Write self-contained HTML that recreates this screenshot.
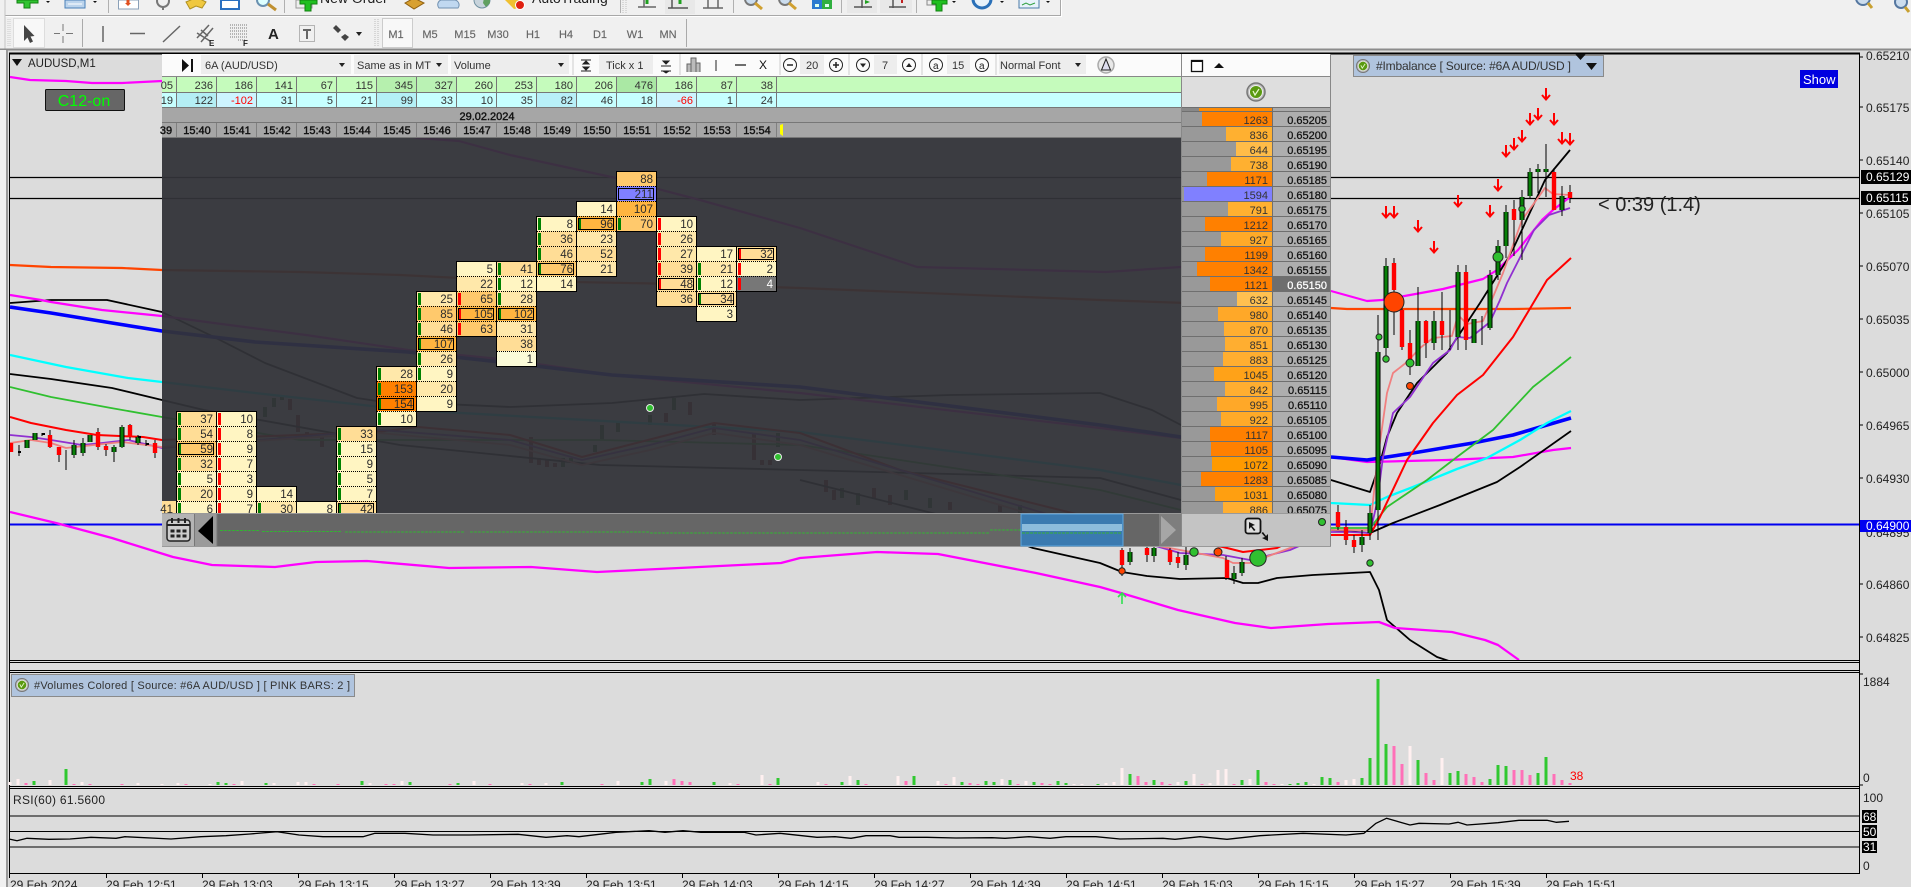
<!DOCTYPE html>
<html><head><meta charset="utf-8"><title>AUDUSD,M1</title>
<style>
html,body{margin:0;padding:0;background:#dcdcdc;overflow:hidden;width:1911px;height:887px}
svg{display:block;font-family:"Liberation Sans",sans-serif}
text{fill:#222;font-size:12px}
.l{fill:none;stroke-linejoin:round}
.c{width:39px;height:15px}
.f0{fill:#fbfbd8}.f1{fill:#fff5c2}.f2{fill:#ffe8aa}.f3{fill:#ffdd96}.f4{fill:#ffc96c}.f5{fill:#ffb540}.f6{fill:#ff8000}.fb{fill:#8080ff}.fg{fill:#777}
.g{width:3px;height:12px;fill:#008000}
.r{width:3px;height:12px;fill:#f00}
.b{width:35px;height:11px;fill:none;stroke:#000}
.o{fill:none;stroke:#000}
.dt{fill:none;stroke:#000;stroke-dasharray:1 1}
.n{text-anchor:end;fill:#2c2c2c;font-size:11.5px}
.t{font-size:11px;text-anchor:middle;fill:#111;stroke:#111;stroke-width:.4}
.p{font-size:11px;text-anchor:end;fill:#111;stroke:#111;stroke-width:.25}
.dv{font-size:11px;text-anchor:end;fill:#333}
.tb{font-size:11px;fill:#333}
.tf{font-size:11px;fill:#666;text-anchor:middle;stroke:#666;stroke-width:.15}
.ax{font-size:12px;fill:#222}
.ti{font-size:11px;fill:#222}
</style></head><body>
<svg width="1911" height="887" viewBox="0 0 1911 887" xmlns="http://www.w3.org/2000/svg">
<defs>
<path id="ar" fill="none" stroke="#f00" stroke-width="2" d="M0 -6V5M-4 1L0 5.5L4 1"/>
<path id="gc" fill="none" d="M1562 196V210M1546 169V172M1538 169V172M1530 172V196M1522 197V220M1506 212V246M1498 246V275M1490 275V328M1474 319V343M1458 272V337M1434 321V343M1418 321V366M1386 266V348M1378 352V510M1370 513V533M1362 537V545M1242 562V573M1234 573V579M1186 555V565M1154 548V556M1130 552V562M27 440V448M35 433V440M74 445V455M83 443V453M90 435V442M114 447V452M122 427V447M138 437V443"/>
<g id="chk"><circle r="9" fill="#bbb" stroke="#777" stroke-width="1.5"/><circle r="6.5" fill="#5a9a10" stroke="#eee" stroke-width="1"/><path d="M-3 -1L-1 3L3 -3" fill="none" stroke="#e8f8d0" stroke-width="1.2"/></g>
</defs>
<rect width="1911" height="887" fill="#dcdcdc"/>
<!-- toolbars -->
<rect width="1911" height="50" fill="#f0f0f0"/>
<path d="M5 15.5H1060.500V0" fill="none" stroke="#a8a8a8"/>
<path d="M5 16.500H1061.500V0" fill="none" stroke="#fff"/>
<path d="M5 0V49" stroke="#c4c4c4" fill="none"/>
<path d="M108.500 0V13M284.500 0V13M620.500 0V13M733.500 0V13M841.500 0V13M916.500 0V13" stroke="#b0b0b0" fill="none"/>
<path d="M0 49.5H1911" stroke="#8c8c8c" stroke-width="2"/>
<!-- top row icons (cropped) -->
<path d="M17 0h21v3h-8v5h-6v-5h-7z" fill="#30c430" stroke="#108010"/>
<path d="M46 1h4l-2 2z" fill="#111"/>
<rect x="65" y="0" width="20" height="8" fill="#bcd4ec" stroke="#4a80b8"/><path d="M68 4h14" stroke="#fff"/>
<path d="M93 1h4l-2 2z" fill="#111"/>
<rect x="118.500" y="0" width="20" height="9" fill="#fff" stroke="#8aa0b8"/><path d="M128 0v4" stroke="#e05020" stroke-width="3"/><path d="M125 3h6l-3 3z" fill="#e05020"/>
<circle cx="163" cy="1" r="6" fill="none" stroke="#777" stroke-width="2"/><path d="M163 6v4" stroke="#777" stroke-width="2"/>
<path d="M186 2L193 -1H200L206 2L202 8L196 6L190 9Z" fill="#f0c840" stroke="#b09020"/>
<rect x="221" y="0" width="18" height="9" fill="#fff" stroke="#2a70c0" stroke-width="2"/>
<circle cx="263" cy="0" r="6" fill="#dff" stroke="#6a90b0" stroke-width="2"/><path d="M268 4L276 10" stroke="#c09030" stroke-width="3"/>
<rect x="296" y="0" width="16" height="8" fill="#eee" stroke="#999"/>
<path d="M300 0h17v4h-6v7h-6v-7h-5z" fill="#20c020" stroke="#108010"/>
<text x="320" y="3" style="font-size:14px" fill="#222">New Order</text>
<path d="M405 3L414 -2L424 3L414 9Z" fill="#d8a030" stroke="#906010"/>
<path d="M439 8a5 5 0 0 1 2 -8h14a5 5 0 0 1 3 8z" fill="#c0d8f0" stroke="#7090b0"/>
<circle cx="482" cy="0" r="8" fill="#c8d4dc" stroke="#7090a0"/><path d="M484 -2h6v5l-4 4l-3 -4z" fill="#60a060"/>
<path d="M505 0h14l4 7l-9 2z" fill="#f0c030"/><circle cx="520" cy="5" r="4.500" fill="#e02010" stroke="#fff"/>
<text x="532" y="3" style="font-size:14px" fill="#222">AutoTrading</text>
<path d="M623 0V14M626 0V14" stroke="#c0c0c0" stroke-dasharray="1 1"/>
<path d="M644 0V7M638 7H656" fill="none" stroke="#666" stroke-width="1.500"/><path d="M647 0v4" stroke="#20a020" stroke-width="3"/>
<rect x="665" y="0" width="30" height="14" fill="#e8e8e8"/>
<path d="M672 0V8M668 8H688" fill="none" stroke="#555" stroke-width="1.500"/><path d="M680 0v4" stroke="#20a020" stroke-width="3"/>
<path d="M708 0V8M703 8H723M718 0V8" fill="none" stroke="#666" stroke-width="1.500"/>
<circle cx="751" cy="-1" r="6" fill="#cde" stroke="#777" stroke-width="2"/><path d="M755 3L762 9" stroke="#d0a030" stroke-width="3"/>
<circle cx="785" cy="-1" r="6" fill="#cde" stroke="#777" stroke-width="2"/><path d="M789 3L796 9" stroke="#d0a030" stroke-width="3"/>
<rect x="812" y="0" width="10" height="9" fill="#2a7ad0"/><rect x="822" y="0" width="10" height="9" fill="#30b040"/><rect x="815" y="4" width="4" height="3" fill="#dfe"/><rect x="825" y="4" width="4" height="3" fill="#dfe"/>
<rect x="847" y="0" width="30" height="13" fill="#e8e8e8"/><rect x="880" y="0" width="32" height="13" fill="#e8e8e8"/>
<path d="M862 0V8M854 7H872" fill="none" stroke="#555" stroke-width="1.500"/><path d="M865 0l5 2-5 2z" fill="#20a020"/>
<path d="M893 0V8M889 7H906" fill="none" stroke="#555" stroke-width="1.500"/><path d="M901 0h2v3h-2z" fill="#c02020"/>
<rect x="927" y="0" width="12" height="5" fill="#eee" stroke="#888"/>
<path d="M932 0h15v4h-5v7h-6v-7h-4z" fill="#20c020" stroke="#108010"/>
<path d="M952 1h4l-2 2z" fill="#111"/>
<circle cx="982" cy="-1" r="9" fill="#e8f2fa" stroke="#2a70b8" stroke-width="3"/>
<path d="M1000 1h4l-2 2z" fill="#111"/>
<rect x="1019" y="-1" width="20" height="9" fill="#e8f2fa" stroke="#4a7aa8"/><path d="M1022 5l4 -2 4 2 5 -2" stroke="#30a040" fill="none"/>
<path d="M1046 1h4l-2 2z" fill="#111"/>
<circle cx="1863" cy="-2" r="7" fill="#cde" stroke="#5577a0" stroke-width="2"/><path d="M1868 3L1872 8" stroke="#c8a030" stroke-width="3"/>
<circle cx="1901" cy="2" r="6" fill="#cde" stroke="#5577a0" stroke-width="2"/><path d="M1905 7L1909 12" stroke="#c8a030" stroke-width="3"/>
<!-- second toolbar -->
<path d="M8 19V47M10 19V47" stroke="#ccc" stroke-dasharray="1 1"/>
<rect x="13.500" y="18.500" width="31" height="29" fill="#f8f8f8" stroke="#ddd"/>
<path d="M24 25L24 41L27.500 37.500L30 43L33 41.500L30.500 36.500L34.500 36Z" fill="#444"/>
<path d="M63 24V31M63 36V43M54 33.500H60M66 33.500H73" stroke="#777"/>
<path d="M82.500 19V47" stroke="#aaa"/>
<path d="M103 26V42" stroke="#666" stroke-width="1.500"/>
<path d="M130 33.500H145" stroke="#666" stroke-width="1.500"/>
<path d="M163 42L180 26" stroke="#666" stroke-width="1.500"/>
<path d="M197 38L209 25M201 42L213 28M197 33L210 41M201 30L208 36" stroke="#666" stroke-width="1.500"/>
<text x="209" y="46" style="font-size:8px;font-weight:bold" fill="#555">E</text>
<path d="M230 25H247M230 28H247M230 31H247M230 34H247M230 37H247M238 40H246" stroke="#777" stroke-dasharray="1 1"/>
<text x="243" y="46" style="font-size:8px;font-weight:bold" fill="#555">F</text>
<text x="268" y="39" style="font-size:15px;font-weight:bold" fill="#666">A</text>
<rect x="299.500" y="25.500" width="15" height="16" fill="none" stroke="#777" stroke-dasharray="1 1"/>
<path d="M303 29h8v2h-3v8h-2v-8h-3z" fill="#666"/>
<path d="M333 28l3 -3 2 2 3 3 -3 3 -5 -5zM341 37l4 -3 4 3 -4 4z" fill="#444"/>
<path d="M356 32h6l-3 4z" fill="#222"/>
<path d="M375 19V47M378 19V47" stroke="#bbb" stroke-dasharray="1 1"/>
<rect x="382.500" y="18.500" width="30" height="29" fill="#f8f8f8" stroke="#ccc"/>
<text class="tf" x="396" y="38">M1</text><text class="tf" x="430" y="38">M5</text><text class="tf" x="465" y="38">M15</text><text class="tf" x="498" y="38">M30</text><text class="tf" x="533" y="38">H1</text><text class="tf" x="566" y="38">H4</text><text class="tf" x="600" y="38">D1</text><text class="tf" x="635" y="38">W1</text><text class="tf" x="668" y="38">MN</text>
<path d="M686.500 19V47" stroke="#aaa"/>
<!-- left frame -->
<rect x="0" y="50" width="6" height="837" fill="#f0f0f0"/>
<rect x="6" y="50" width="2" height="837" fill="#999"/>
<path d="M9.5 53V873" stroke="#000"/>
<path d="M9 53.5H1860" stroke="#000" stroke-width="2"/>
<!-- MAIN CHART -->
<svg x="10" y="54" width="1850" height="607" viewBox="10 54 1850 607">
<path d="M0 177.5H1860M0 198.5H1860" stroke="#000" stroke-width="1.2"/>
<path d="M0 524.5H1860" stroke="#0000f0" stroke-width="2"/>
<!-- faint candles (under panel) -->
<g fill="none" stroke="#226622" stroke-width="4"><path d="M265 407V417M274 398V407M282 396V400M618 422V432M602 425V440M674 398V410M563 458V467M778 433V447M571 458V463M595 445V452M650 415V425M842 488V498M858 493V505M906 490V500M930 498V508M1020 505V515"/></g>
<g fill="none" stroke="#8a1818" stroke-width="4"><path d="M290 399V410M298 415V432M307 432V437M322 437V447M531 437V463M539 458V465M547 460V467M555 463V467M666 413V422M690 402V415M714 423V435M754 433V460M762 460V465M770 460V465M826 480V492M834 490V500M874 488V498M890 495V505M950 502V510M1000 505V512"/></g>
<!-- lines -->
<polyline class="l" stroke="#f0f" stroke-width="2.2" points="10,77 30,80 66,81 92,83 122,83 162,81 300,110 418,138 459,141 510,155 616,178 700,200 800,228 917,267 1106,272 1181,267 1331,291 1367,301 1382,300 1410,295 1443,289 1467,283 1483,279 1497,270 1518,250 1542,220 1553,210 1570,197"/>
<polyline class="l" stroke="#f40" stroke-width="2.2" points="10,265 51,267 122,268 162,270 300,272 400,275 520,281 680,284 800,288 1100,300 1331,308 1347,309 1513,309 1571,308"/>
<polyline class="l" stroke="#000" stroke-width="1.800" points="10,303 51,300 107,300 162,312 214,337 265,363 357,398 377,401 510,407 612,403 704,394 800,400 950,395 1100,393 1152,410 1181,425 1331,480 1370,492 1380,463 1387,437 1397,413 1417,383 1447,353 1480,303 1507,260 1514,247 1545,180 1570,150"/>
<polyline class="l" stroke="#f0f" stroke-width="2.2" points="10,295 41,300 51,302 102,310 162,316 214,323 306,335 408,350 510,360 612,375 800,393 1100,428 1181,438 1331,457 1367,462 1447,460 1513,457 1553,450 1571,448"/>
<polyline class="l" stroke="#00f" stroke-width="3.6" points="10,307 51,313 112,323 162,331 255,342 408,352 510,363 612,375 800,387 1100,425 1181,437 1331,457 1367,460 1413,453 1473,443 1513,435 1571,418"/>
<polyline class="l" stroke="#0ff" stroke-width="2.300" points="10,355 66,367 128,378 162,382 255,393 408,410 800,432 1100,470 1181,485 1331,503 1370,505 1387,497 1413,487 1457,469 1487,458 1520,440 1547,423 1571,411"/>
<polyline class="l" stroke="#000" stroke-width="1.800" points="10,374 51,379 112,388 162,400 204,410 400,445 600,465 800,470 1100,478 1181,500 1331,530 1370,533 1393,523 1440,505 1497,482 1520,467 1571,431"/>
<polyline class="l" stroke="#30c030" stroke-width="1.800" points="10,387 51,397 111,408 162,417 300,440 600,440 800,445 1100,490 1181,510 1331,528 1370,528 1387,507 1427,480 1457,457 1493,430 1533,387 1571,357"/>
<polyline class="l" stroke="#f00" stroke-width="2" points="10,417 31,423 66,430 97,435 143,437 162,440 377,432 418,427 510,435 582,457 648,440 714,423 800,433 900,470 1000,495 1100,520 1181,540 1223,547 1243,552 1277,548 1287,543 1331,535 1370,535 1380,517 1407,460 1433,423 1457,395 1483,375 1513,337 1547,280 1571,258"/>
<polyline class="l" stroke="#000" stroke-width="1.800" points="800,480 960,520 1033,548 1100,563 1122,572 1147,576 1180,579 1227,578 1243,583 1258,583 1277,578 1313,575 1370,572 1379,590 1387,620 1410,640 1437,657 1449,661"/>
<polyline class="l" stroke="#f0f" stroke-width="2.300" points="10,512 56,523 112,538 173,557 212,565 275,567 316,562 367,561 449,568 531,567 597,572 679,568 781,563 800,558 877,552 938,554 1036,573 1100,587 1121,593 1178,610 1235,623 1271,628 1328,624 1379,622 1395,628 1452,632 1485,640 1498,645 1519,660"/>
<polyline class="l" stroke="#9030d0" stroke-width="1.800" points="10,435 31,437 51,440 82,445 102,443 128,440 162,448 380,430 510,440 582,460 650,445 714,428 800,440 1100,530 1180,553 1223,555 1250,560 1290,550 1331,532 1350,532 1370,533 1377,503 1383,457 1393,413 1410,397 1433,363 1450,350 1457,337 1470,338 1490,322 1500,300 1507,283 1534,230 1549,215 1570,208"/>
<polyline class="l" stroke="#f08080" stroke-width="1.800" points="10,443 31,440 51,443 66,448 122,442 162,447 380,433 510,445 582,465 650,450 714,433 800,445 1100,535 1223,558 1233,563 1250,563 1290,548 1331,530 1370,530 1377,463 1387,393 1393,373 1407,362 1420,348 1433,338 1452,336 1458,315 1467,324 1483,321 1503,273 1522,220 1545,188 1553,194 1570,195"/>
<!-- wicks -->
<path stroke="#000" fill="none" d="M1570 185V203M1562 186V216M1554 168V172M1546 144V197M1538 164V193M1530 168V198M1522 190V260M1514 200V256M1506 205V258M1498 240V280M1490 270V330M1482 316V345M1466 265V350M1458 265V350M1450 310V350M1442 292V350M1434 311V350M1426 320V358M1418 287V366M1402 305V350M1394 258V335M1386 258V362M1378 315V360M1378 510V540M1370 505V540M1362 530V552M1354 535V553M1346 520V545M1338 505V530M1410 330V375M59 455V462M66 450V470M50 430V448M74 440V458M83 438V456M98 428V450M106 444V456M114 445V462M122 425V448M130 424V440M138 435V445M146 440V446M155 440V458M42 433V436M19 445V456M1226 556V580M1234 566V584M1242 558V576M1122 548V576M1130 548V565M1147 545V562M1154 545V562M1170 548V565M1178 552V568M1186 545V570"/>
<use href="#gc" stroke="#000" stroke-width="5"/>
<use href="#gc" stroke="#088008" stroke-width="3"/>
<path fill="none" stroke="#f00" stroke-width="4.4" d="M1570 192V198M1554 172V210M1514 209V220M1466 272V340M1442 321V335M1426 321V343M1410 343V360M1402 310V347M1394 263V290M11 443V452M50 435V447M59 447V455M98 432V447M106 446V450M130 425V437M155 443V453M1354 540V547M1346 527V540M1338 512V527M1227 560V578M1178 557V563M1170 550V562M1147 548V555M1122 550V565"/>
<path stroke="#000" stroke-width="2" d="M18 452h3M42 434h3M138 437h3M146 444h3"/>
<!-- circles -->
<circle cx="1394" cy="302" r="10" fill="#f40" stroke="#222"/>
<circle cx="1498" cy="257" r="5" fill="#30c030" stroke="#222"/>
<circle cx="1522" cy="209" r="3.2" fill="#30c030" stroke="#222"/>
<circle cx="1379" cy="337" r="3" fill="#30c030" stroke="#222"/>
<circle cx="1386" cy="359" r="3.2" fill="#30c030" stroke="#222"/>
<circle cx="1410" cy="363" r="4" fill="#30c030" stroke="#222"/>
<circle cx="1410" cy="386" r="3.500" fill="#f40" stroke="#222"/>
<circle cx="1122" cy="571" r="3.2" fill="#f40" stroke="#222"/>
<circle cx="1194" cy="552" r="4.2" fill="#30c030" stroke="#222"/>
<circle cx="1218" cy="552" r="4" fill="#f40" stroke="#222"/>
<circle cx="1258" cy="558" r="8.2" fill="#30c030" stroke="#222"/>
<circle cx="1370" cy="563" r="3.2" fill="#30c030" stroke="#222"/>
<path d="M1122 604V593M1118 597L1122 593L1126 597" fill="none" stroke="#30e050" stroke-width="1.6"/>
<!-- arrows -->
<use href="#ar" x="1546" y="94"/><use href="#ar" x="1538" y="114"/><use href="#ar" x="1530" y="119"/><use href="#ar" x="1554" y="119"/><use href="#ar" x="1522" y="136"/><use href="#ar" x="1514" y="144"/><use href="#ar" x="1506" y="151"/><use href="#ar" x="1562" y="138"/><use href="#ar" x="1570" y="139"/><use href="#ar" x="1498" y="185"/><use href="#ar" x="1458" y="201"/><use href="#ar" x="1490" y="211"/><use href="#ar" x="1386" y="212"/><use href="#ar" x="1394" y="212"/><use href="#ar" x="1418" y="226"/><use href="#ar" x="1434" y="247"/>
</svg>
<!-- chart texts -->
<path d="M12 59h10l-5 7z" fill="#111"/>
<text x="28" y="67" class="ti" style="font-size:11.500px">AUDUSD,M1</text>
<rect x="45.5" y="89.5" width="79" height="21" rx="1" fill="#666" stroke="#111"/>
<text x="84" y="106" text-anchor="middle" style="font-size:16px;fill:#0f0">C12-on</text>
<rect x="1353.5" y="55.5" width="250" height="21" fill="#b0c4de" stroke="#8a8a8a"/>
<g transform="translate(1363,66) scale(.72)"><use href="#chk"/></g>
<text x="1376" y="70" style="font-size:12px;fill:#333" textLength="195">#Imbalance [ Source: #6A AUD/USD ]</text>
<path d="M1586 63h11l-5.5 7z" fill="#111"/><path d="M1575 54h11l-5.5 6z" fill="#111"/>
<rect x="1800" y="70" width="38" height="18" fill="#0000e0"/>
<text x="1803" y="84" style="font-size:13px;fill:#fff">Show</text>
<text x="1598" y="211" style="font-size:20px;fill:#222">&lt; 0:39 (1.4)</text>

<!-- PANEL -->
<rect x="162" y="54" width="1169" height="22" fill="#fbfbfb"/>
<path d="M162 76.5H1331" stroke="#888"/>
<rect x="162" y="77" width="1019" height="15" fill="#c5fbbc"/>
<rect x="162" y="93" width="1019" height="14" fill="#c6ffff"/>
<path d="M162 92.5H1181" stroke="#777"/>
<rect x="162" y="137" width="1019" height="376" fill="#323338" opacity=".95"/>
<path d="M162 137.5H1181" stroke="#777"/>
<!-- delta shades -->
<rect x="377" y="77" width="39" height="15" fill="#b6f0ae"/><rect x="417" y="77" width="39" height="15" fill="#baf2b4"/><rect x="617" y="77" width="39" height="15" fill="#aae8a4"/><rect x="177" y="93" width="39" height="14" fill="#b4eef4"/><rect x="377" y="93" width="39" height="14" fill="#b4f0f6"/><rect x="537" y="93" width="39" height="14" fill="#b8f0f8"/><rect x="217" y="93" width="39" height="14" fill="#cdf4ff"/><rect x="657" y="93" width="39" height="14" fill="#cdf4ff"/>
<path d="M176.500 77V107M216.500 77V107M256.500 77V107M296.500 77V107M336.500 77V107M376.500 77V107M416.500 77V107M456.500 77V107M496.500 77V107M536.500 77V107M576.500 77V107M616.500 77V107M656.500 77V107M696.500 77V107M736.500 77V107M776.500 77V107" stroke="#777"/>
<rect x="162" y="107" width="1019" height="15" fill="#a6a6a6"/>
<rect x="162" y="123" width="1019" height="14" fill="#a6a6a6"/>
<path d="M162 107.5H1181M162 122.5H1181" stroke="#777"/>
<path d="M176.500 123V137M216.500 123V137M256.500 123V137M296.500 123V137M336.500 123V137M376.500 123V137M416.500 123V137M456.500 123V137M496.500 123V137M536.500 123V137M576.500 123V137M616.500 123V137M656.500 123V137M696.500 123V137M736.500 123V137M776.500 123V137" stroke="#808080"/>
<g>
<text class="dv" x="173" y="89">05</text><text class="dv" x="213" y="89">236</text><text class="dv" x="253" y="89">186</text><text class="dv" x="293" y="89">141</text><text class="dv" x="333" y="89">67</text><text class="dv" x="373" y="89">115</text><text class="dv" x="413" y="89">345</text><text class="dv" x="453" y="89">327</text><text class="dv" x="493" y="89">260</text><text class="dv" x="533" y="89">253</text><text class="dv" x="573" y="89">180</text><text class="dv" x="613" y="89">206</text><text class="dv" x="653" y="89">476</text><text class="dv" x="693" y="89">186</text><text class="dv" x="733" y="89">87</text><text class="dv" x="773" y="89">38</text>
<text class="dv" x="173" y="104">19</text><text class="dv" x="213" y="104">122</text><text class="dv" x="253" y="104" style="fill:#f00">-102</text><text class="dv" x="293" y="104">31</text><text class="dv" x="333" y="104">5</text><text class="dv" x="373" y="104">21</text><text class="dv" x="413" y="104">99</text><text class="dv" x="453" y="104">33</text><text class="dv" x="493" y="104">10</text><text class="dv" x="533" y="104">35</text><text class="dv" x="573" y="104">82</text><text class="dv" x="613" y="104">46</text><text class="dv" x="653" y="104">18</text><text class="dv" x="693" y="104" style="fill:#f00">-66</text><text class="dv" x="733" y="104">1</text><text class="dv" x="773" y="104">24</text>
</g>
<text x="487" y="120" class="t">29.02.2024</text>
<text class="t" x="166" y="134">39</text><text class="t" x="197" y="134">15:40</text><text class="t" x="237" y="134">15:41</text><text class="t" x="277" y="134">15:42</text><text class="t" x="317" y="134">15:43</text><text class="t" x="357" y="134">15:44</text><text class="t" x="397" y="134">15:45</text><text class="t" x="437" y="134">15:46</text><text class="t" x="477" y="134">15:47</text><text class="t" x="517" y="134">15:48</text><text class="t" x="557" y="134">15:49</text><text class="t" x="597" y="134">15:50</text><text class="t" x="637" y="134">15:51</text><text class="t" x="677" y="134">15:52</text><text class="t" x="717" y="134">15:53</text><text class="t" x="757" y="134">15:54</text>
<path d="M780 125L783 124V136L780 134Z" fill="#ff0"/>
<!-- panel toolbar -->
<path d="M182 59L189 65.5L182 72Z" fill="#111"/><path d="M192 59V72" stroke="#111" stroke-width="2"/>
<rect x="201" y="55" width="150" height="19" fill="#ededed"/><text x="205" y="69" class="tb">6A (AUD/USD)</text><path d="M339 63h6l-3 4z" fill="#222"/>
<rect x="354" y="55" width="94" height="19" fill="#ededed"/><text x="357" y="69" class="tb">Same as in MT</text><path d="M436 63h6l-3 4z" fill="#222"/>
<rect x="451" y="55" width="118" height="19" fill="#ededed"/><text x="454" y="69" class="tb">Volume</text><path d="M558 63h6l-3 4z" fill="#222"/>
<path d="M573 54V75" stroke="#ccc"/>
<path d="M581 60h10M581 71h10M586 61l-3 3h6zM586 70l-3 -3h6z" stroke="#222" fill="#222"/>
<rect x="599" y="55" width="54" height="19" fill="#ededed"/><text x="606" y="69" class="tb">Tick x 1</text>
<path d="M661 66h10M661 71h10M666 64l-3 -3h6zM666 73l-3 -2h6z" stroke="#222" fill="#222"/>
<path d="M680 54V75" stroke="#ccc"/>
<path d="M687 72V64h4v8M691 72V58h5v14M696 72V63h4v9" fill="#bbb" stroke="#666"/>
<path d="M716 60V71" stroke="#222"/>
<path d="M735 65H746" stroke="#222" stroke-width="1.3"/>
<text x="759" y="69" class="tb" style="fill:#111;font-size:12px">X</text>
<path d="M780 54V75" stroke="#ccc"/>
<circle cx="790" cy="65" r="6.5" fill="none" stroke="#222"/><path d="M787 65h6" stroke="#222" stroke-width="1.5"/>
<rect x="800" y="55" width="24" height="19" fill="#ededed"/><text x="806" y="69" class="tb">20</text>
<circle cx="836" cy="65" r="6.5" fill="none" stroke="#222"/><path d="M833 65h6M836 62v6" stroke="#222" stroke-width="1.5"/>
<path d="M849 54V75" stroke="#ccc"/>
<circle cx="863" cy="65" r="6.5" fill="none" stroke="#222"/><path d="M860 63.500h6l-3 4z" fill="#222"/>
<rect x="874" y="55" width="23" height="19" fill="#ededed"/><text x="882" y="69" class="tb">7</text>
<circle cx="909" cy="65" r="6.5" fill="none" stroke="#222"/><path d="M906 67h6l-3 -4z" fill="#222"/>
<path d="M922 54V75" stroke="#ccc"/>
<circle cx="936" cy="65" r="6.5" fill="none" stroke="#222"/><text x="933" y="69" style="font-size:10px">a</text>
<rect x="947" y="55" width="23" height="19" fill="#ededed"/><text x="952" y="69" class="tb">15</text>
<circle cx="982" cy="65" r="6.5" fill="none" stroke="#222"/><text x="979" y="69" style="font-size:10px">a</text>
<path d="M996 54V75" stroke="#ccc"/>
<rect x="999" y="55" width="87" height="19" fill="#ededed"/><text x="1000" y="69" class="tb">Normal Font</text><path d="M1075 63h6l-3 4z" fill="#222"/>
<circle cx="1106" cy="65" r="8" fill="#e8e8e8" stroke="#aaa" stroke-width="1.5"/><path d="M1106 59L1110.500 70H1101.500Z" fill="#dde" stroke="#222"/>
<rect x="1191.500" y="60.500" width="11" height="11" fill="#fff" stroke="#111" stroke-width="1.300"/><path d="M1191 61h12" stroke="#111" stroke-width="2"/>
<path d="M1214 68h10l-5 -5z" fill="#111"/>
<!-- DOM -->
<rect x="1181" y="77" width="150" height="30" fill="#dedede"/>
<path d="M1181.500 54V546M1330.500 54V546" stroke="#888"/>
<use href="#chk" x="1256" y="92"/>
<rect x="1182" y="107" width="148" height="406" fill="#6f6f6f"/>
<rect x="1182" y="108" width="90" height="3" fill="#888"/><rect x="1199" y="108" width="73" height="3" fill="#ff8a00"/><rect x="1273" y="108" width="57" height="3" fill="#aaa"/>
<g fill="#999">
<rect x="1182" y="112" width="90" height="14"/><rect x="1182" y="127" width="90" height="14"/><rect x="1182" y="142" width="90" height="14"/><rect x="1182" y="157" width="90" height="14"/><rect x="1182" y="172" width="90" height="14"/><rect x="1182" y="187" width="90" height="14"/><rect x="1182" y="202" width="90" height="14"/><rect x="1182" y="217" width="90" height="14"/><rect x="1182" y="232" width="90" height="14"/><rect x="1182" y="247" width="90" height="14"/><rect x="1182" y="262" width="90" height="14"/><rect x="1182" y="277" width="90" height="14"/><rect x="1182" y="292" width="90" height="14"/><rect x="1182" y="307" width="90" height="14"/><rect x="1182" y="322" width="90" height="14"/><rect x="1182" y="337" width="90" height="14"/><rect x="1182" y="352" width="90" height="14"/><rect x="1182" y="367" width="90" height="14"/><rect x="1182" y="382" width="90" height="14"/><rect x="1182" y="397" width="90" height="14"/><rect x="1182" y="412" width="90" height="14"/><rect x="1182" y="427" width="90" height="14"/><rect x="1182" y="442" width="90" height="14"/><rect x="1182" y="457" width="90" height="14"/><rect x="1182" y="472" width="90" height="14"/><rect x="1182" y="487" width="90" height="14"/><rect x="1182" y="502" width="90" height="11"/>
</g>
<g fill="#aeaeae">
<rect x="1273" y="112" width="57" height="14"/><rect x="1273" y="127" width="57" height="14"/><rect x="1273" y="142" width="57" height="14"/><rect x="1273" y="157" width="57" height="14"/><rect x="1273" y="172" width="57" height="14"/><rect x="1273" y="187" width="57" height="14"/><rect x="1273" y="202" width="57" height="14"/><rect x="1273" y="217" width="57" height="14"/><rect x="1273" y="232" width="57" height="14"/><rect x="1273" y="247" width="57" height="14"/><rect x="1273" y="262" width="57" height="14"/><rect x="1273" y="277" width="57" height="14" fill="#6e6e6e"/><rect x="1273" y="292" width="57" height="14"/><rect x="1273" y="307" width="57" height="14"/><rect x="1273" y="322" width="57" height="14"/><rect x="1273" y="337" width="57" height="14"/><rect x="1273" y="352" width="57" height="14"/><rect x="1273" y="367" width="57" height="14"/><rect x="1273" y="382" width="57" height="14"/><rect x="1273" y="397" width="57" height="14"/><rect x="1273" y="412" width="57" height="14"/><rect x="1273" y="427" width="57" height="14"/><rect x="1273" y="442" width="57" height="14"/><rect x="1273" y="457" width="57" height="14"/><rect x="1273" y="472" width="57" height="14"/><rect x="1273" y="487" width="57" height="14"/><rect x="1273" y="502" width="57" height="11"/>
</g>
<rect x="1202" y="112" width="70" height="14" fill="#ff8000"/><rect x="1226" y="127" width="46" height="14" fill="#ffb030"/><rect x="1236" y="142" width="36" height="14" fill="#ffbc48"/><rect x="1231" y="157" width="41" height="14" fill="#ffb030"/><rect x="1207" y="172" width="65" height="14" fill="#ff8000"/><rect x="1184" y="187" width="88" height="14" fill="#8080ff"/><rect x="1228" y="202" width="44" height="14" fill="#ffb030"/><rect x="1205" y="217" width="67" height="14" fill="#ff8000"/><rect x="1221" y="232" width="51" height="14" fill="#ffaa28"/><rect x="1205" y="247" width="67" height="14" fill="#ff8000"/><rect x="1197" y="262" width="75" height="14" fill="#ff8000"/><rect x="1210" y="277" width="62" height="14" fill="#ff8000"/><rect x="1237" y="292" width="35" height="14" fill="#ffc050"/><rect x="1218" y="307" width="54" height="14" fill="#ffa828"/><rect x="1224" y="322" width="48" height="14" fill="#ffae30"/><rect x="1225" y="337" width="47" height="14" fill="#ffae30"/><rect x="1223" y="352" width="49" height="14" fill="#ffae30"/><rect x="1214" y="367" width="58" height="14" fill="#ffa218"/><rect x="1225" y="382" width="47" height="14" fill="#ffae30"/><rect x="1217" y="397" width="55" height="14" fill="#ffa828"/><rect x="1221" y="412" width="51" height="14" fill="#ffaa28"/><rect x="1210" y="427" width="62" height="14" fill="#ff8000"/><rect x="1211" y="442" width="61" height="14" fill="#ff8000"/><rect x="1212" y="457" width="60" height="14" fill="#ff9a00"/><rect x="1201" y="472" width="71" height="14" fill="#ff8000"/><rect x="1215" y="487" width="57" height="14" fill="#ff9f10"/><rect x="1223" y="502" width="49" height="11" fill="#ffae30"/>
<g>
<text class="dv" x="1268" y="124">1263</text><text class="dv" x="1268" y="139">836</text><text class="dv" x="1268" y="154">644</text><text class="dv" x="1268" y="169">738</text><text class="dv" x="1268" y="184">1171</text><text class="dv" x="1268" y="199">1594</text><text class="dv" x="1268" y="214">791</text><text class="dv" x="1268" y="229">1212</text><text class="dv" x="1268" y="244">927</text><text class="dv" x="1268" y="259">1199</text><text class="dv" x="1268" y="274">1342</text><text class="dv" x="1268" y="289">1121</text><text class="dv" x="1268" y="304">632</text><text class="dv" x="1268" y="319">980</text><text class="dv" x="1268" y="334">870</text><text class="dv" x="1268" y="349">851</text><text class="dv" x="1268" y="364">883</text><text class="dv" x="1268" y="379">1045</text><text class="dv" x="1268" y="394">842</text><text class="dv" x="1268" y="409">995</text><text class="dv" x="1268" y="424">922</text><text class="dv" x="1268" y="439">1117</text><text class="dv" x="1268" y="454">1105</text><text class="dv" x="1268" y="469">1072</text><text class="dv" x="1268" y="484">1283</text><text class="dv" x="1268" y="499">1031</text><text class="dv" x="1268" y="514">886</text>
<text class="p" x="1327" y="124">0.65205</text><text class="p" x="1327" y="139">0.65200</text><text class="p" x="1327" y="154">0.65195</text><text class="p" x="1327" y="169">0.65190</text><text class="p" x="1327" y="184">0.65185</text><text class="p" x="1327" y="199">0.65180</text><text class="p" x="1327" y="214">0.65175</text><text class="p" x="1327" y="229">0.65170</text><text class="p" x="1327" y="244">0.65165</text><text class="p" x="1327" y="259">0.65160</text><text class="p" x="1327" y="274">0.65155</text><text class="p" x="1327" y="289" style="fill:#fff;stroke:#fff">0.65150</text><text class="p" x="1327" y="304">0.65145</text><text class="p" x="1327" y="319">0.65140</text><text class="p" x="1327" y="334">0.65135</text><text class="p" x="1327" y="349">0.65130</text><text class="p" x="1327" y="364">0.65125</text><text class="p" x="1327" y="379">0.65120</text><text class="p" x="1327" y="394">0.65115</text><text class="p" x="1327" y="409">0.65110</text><text class="p" x="1327" y="424">0.65105</text><text class="p" x="1327" y="439">0.65100</text><text class="p" x="1327" y="454">0.65095</text><text class="p" x="1327" y="469">0.65090</text><text class="p" x="1327" y="484">0.65085</text><text class="p" x="1327" y="499">0.65080</text><text class="p" x="1327" y="514">0.65075</text>
</g>
<!-- footprint cells -->
<g>
<rect class="c f3" x="162" y="501" style="width:14px"/><text class="n" x="173" y="513">41</text>
<rect class="c f3" x="177" y="411"/><rect class="c f3" x="177" y="426"/><rect class="c f4" x="177" y="441"/><rect class="c f3" x="177" y="456"/><rect class="c f1" x="177" y="471"/><rect class="c f2" x="177" y="486"/><rect class="c f1" x="177" y="501"/>
<rect class="c f1" x="217" y="411"/><rect class="c f1" x="217" y="426"/><rect class="c f1" x="217" y="441"/><rect class="c f1" x="217" y="456"/><rect class="c f1" x="217" y="471"/><rect class="c f1" x="217" y="486"/><rect class="c f1" x="217" y="501"/>
<rect class="c f1" x="257" y="486"/><rect class="c f2" x="257" y="501"/>
<rect class="c f1" x="297" y="501"/>
<rect class="c f3" x="337" y="426"/><rect class="c f1" x="337" y="441"/><rect class="c f1" x="337" y="456"/><rect class="c f1" x="337" y="471"/><rect class="c f1" x="337" y="486"/><rect class="c f3" x="337" y="501"/>
<rect class="c f2" x="377" y="366"/><rect class="c f6" x="377" y="381"/><rect class="c f6" x="377" y="396"/><rect class="c f1" x="377" y="411"/>
<rect class="c f2" x="417" y="291"/><rect class="c f4" x="417" y="306"/><rect class="c f3" x="417" y="321"/><rect class="c f5" x="417" y="336"/><rect class="c f2" x="417" y="351"/><rect class="c f1" x="417" y="366"/><rect class="c f2" x="417" y="381"/><rect class="c f1" x="417" y="396"/>
<rect class="c f1" x="457" y="261"/><rect class="c f2" x="457" y="276"/><rect class="c f4" x="457" y="291"/><rect class="c f5" x="457" y="306"/><rect class="c f4" x="457" y="321"/>
<rect class="c f3" x="497" y="261"/><rect class="c f1" x="497" y="276"/><rect class="c f2" x="497" y="291"/><rect class="c f5" x="497" y="306"/><rect class="c f2" x="497" y="321"/><rect class="c f3" x="497" y="336"/><rect class="c f0" x="497" y="351"/>
<rect class="c f1" x="537" y="216"/><rect class="c f3" x="537" y="231"/><rect class="c f3" x="537" y="246"/><rect class="c f4" x="537" y="261"/><rect class="c f1" x="537" y="276"/>
<rect class="c f1" x="577" y="201"/><rect class="c f5" x="577" y="216"/><rect class="c f2" x="577" y="231"/><rect class="c f3" x="577" y="246"/><rect class="c f2" x="577" y="261"/>
<rect class="c f4" x="617" y="171"/><rect class="c fb" x="617" y="186"/><rect class="c f5" x="617" y="201"/><rect class="c f4" x="617" y="216"/>
<rect class="c f1" x="657" y="216"/><rect class="c f2" x="657" y="231"/><rect class="c f2" x="657" y="246"/><rect class="c f3" x="657" y="261"/><rect class="c f3" x="657" y="276"/><rect class="c f3" x="657" y="291"/>
<rect class="c f1" x="697" y="246"/><rect class="c f2" x="697" y="261"/><rect class="c f1" x="697" y="276"/><rect class="c f3" x="697" y="291"/><rect class="c f1" x="697" y="306"/>
<rect class="c f3" x="737" y="246"/><rect class="c f1" x="737" y="261"/><rect class="c fg" x="737" y="276"/>
<!-- dotted -->
<path class="dt" d="M177 426.500h39m-39 15h39m-39 15h39m-39 15h39m-39 15h39m-39 15h39M217 426.500h39m-39 15h39m-39 15h39m-39 15h39m-39 15h39m-39 15h39M257 501.500h39M337 441.500h39m-39 15h39m-39 15h39m-39 15h39m-39 15h39M377 381.500h39m-39 15h39m-39 15h39M417 306.500h39m-39 15h39m-39 15h39m-39 15h39m-39 15h39m-39 15h39m-39 15h39M457 276.500h39m-39 15h39m-39 15h39m-39 15h39M497 276.500h39m-39 15h39m-39 15h39m-39 15h39m-39 15h39m-39 15h39M537 231.500h39m-39 15h39m-39 15h39m-39 15h39M577 216.500h39m-39 15h39m-39 15h39m-39 15h39M617 186.500h39m-39 15h39m-39 15h39M657 231.500h39m-39 15h39m-39 15h39m-39 15h39m-39 15h39M697 261.500h39m-39 15h39m-39 15h39m-39 15h39M737 261.500h39m-39 15h39"/>
<!-- outlines -->
<path class="o" d="M176.500 411.500h40v110h-40zM216.500 411.500h40v110h-40zM256.500 486.500h40v30h-40zM296.500 501.500h40v20h-40zM336.500 426.500h40v90h-40zM376.500 366.500h40v60h-40zM416.500 291.500h40v120h-40zM456.500 261.500h40v75h-40zM496.500 261.500h40v105h-40zM536.500 216.500h40v75h-40zM576.500 201.500h40v75h-40zM616.500 171.500h40v60h-40zM656.500 216.500h40v90h-40zM696.500 246.500h40v75h-40zM736.500 246.500h40v45h-40z"/>
<!-- bars -->
<rect class="g" x="178" y="413"/><rect class="g" x="178" y="428"/><rect class="g" x="178" y="443"/><rect class="g" x="178" y="458"/><rect class="g" x="178" y="473"/><rect class="g" x="178" y="488"/><rect class="g" x="178" y="503"/>
<rect class="r" x="218" y="413"/><rect class="r" x="218" y="428"/><rect class="r" x="218" y="443"/><rect class="r" x="218" y="458"/><rect class="r" x="218" y="473"/><rect class="r" x="218" y="488"/><rect class="r" x="218" y="503"/>
<rect class="g" x="258" y="503"/>
<rect class="g" x="338" y="428"/><rect class="g" x="338" y="443"/><rect class="g" x="338" y="458"/><rect class="g" x="338" y="473"/><rect class="g" x="338" y="488"/><rect class="g" x="338" y="503"/>
<rect class="g" x="378" y="368"/><rect class="g" x="378" y="383"/><rect class="g" x="378" y="398"/><rect class="g" x="378" y="413"/>
<rect class="g" x="418" y="293"/><rect class="g" x="418" y="308"/><rect class="g" x="418" y="323"/><rect class="g" x="418" y="338"/><rect class="g" x="418" y="353"/><rect class="g" x="418" y="368"/>
<rect class="r" x="458" y="293"/><rect class="r" x="458" y="308"/><rect class="r" x="458" y="323"/>
<rect class="g" x="498" y="263"/><rect class="g" x="498" y="278"/><rect class="g" x="498" y="293"/><rect class="g" x="498" y="308"/>
<rect class="g" x="538" y="218"/><rect class="g" x="538" y="233"/><rect class="g" x="538" y="248"/><rect class="g" x="538" y="263"/>
<rect class="g" x="578" y="218"/>
<rect class="g" x="618" y="218"/>
<rect class="r" x="658" y="218"/><rect class="r" x="658" y="233"/><rect class="r" x="658" y="248"/><rect class="r" x="658" y="263"/><rect class="r" x="658" y="278"/>
<rect class="g" x="698" y="263"/><rect class="g" x="698" y="278"/><rect class="g" x="698" y="293"/>
<rect class="r" x="738" y="248"/><rect class="r" x="738" y="263"/><rect class="r" x="738" y="278"/>
<!-- boxes -->
<rect class="b" x="178.500" y="443.500"/><rect class="b" x="338.500" y="503.500"/><rect class="b" x="378.500" y="398.500"/><rect class="b" x="418.500" y="338.500"/><rect class="b" x="458.500" y="308.500"/><rect class="b" x="498.500" y="308.500"/><rect class="b" x="538.500" y="263.500"/><rect class="b" x="578.500" y="218.500"/><rect class="b" x="618.500" y="188.500"/><rect class="b" x="658.500" y="278.500"/><rect class="b" x="698.500" y="293.500"/><rect class="b" x="738.500" y="248.500"/>
<!-- numbers -->
<text class="n" x="213" y="423">37</text><text class="n" x="213" y="438">54</text><text class="n" x="213" y="453">59</text><text class="n" x="213" y="468">32</text><text class="n" x="213" y="483">5</text><text class="n" x="213" y="498">20</text><text class="n" x="213" y="513">6</text>
<text class="n" x="253" y="423">10</text><text class="n" x="253" y="438">8</text><text class="n" x="253" y="453">9</text><text class="n" x="253" y="468">7</text><text class="n" x="253" y="483">3</text><text class="n" x="253" y="498">9</text><text class="n" x="253" y="513">7</text>
<text class="n" x="293" y="498">14</text><text class="n" x="293" y="513">30</text>
<text class="n" x="333" y="513">8</text>
<text class="n" x="373" y="438">33</text><text class="n" x="373" y="453">15</text><text class="n" x="373" y="468">9</text><text class="n" x="373" y="483">5</text><text class="n" x="373" y="498">7</text><text class="n" x="373" y="513">42</text>
<text class="n" x="413" y="378">28</text><text class="n" x="413" y="393">153</text><text class="n" x="413" y="408">154</text><text class="n" x="413" y="423">10</text>
<text class="n" x="453" y="303">25</text><text class="n" x="453" y="318">85</text><text class="n" x="453" y="333">46</text><text class="n" x="453" y="348">107</text><text class="n" x="453" y="363">26</text><text class="n" x="453" y="378">9</text><text class="n" x="453" y="393">20</text><text class="n" x="453" y="408">9</text>
<text class="n" x="493" y="273">5</text><text class="n" x="493" y="288">22</text><text class="n" x="493" y="303">65</text><text class="n" x="493" y="318">105</text><text class="n" x="493" y="333">63</text>
<text class="n" x="533" y="273">41</text><text class="n" x="533" y="288">12</text><text class="n" x="533" y="303">28</text><text class="n" x="533" y="318">102</text><text class="n" x="533" y="333">31</text><text class="n" x="533" y="348">38</text><text class="n" x="533" y="363">1</text>
<text class="n" x="573" y="228">8</text><text class="n" x="573" y="243">36</text><text class="n" x="573" y="258">46</text><text class="n" x="573" y="273">76</text><text class="n" x="573" y="288">14</text>
<text class="n" x="613" y="213">14</text><text class="n" x="613" y="228">96</text><text class="n" x="613" y="243">23</text><text class="n" x="613" y="258">52</text><text class="n" x="613" y="273">21</text>
<text class="n" x="653" y="183">88</text><text class="n" x="653" y="198">211</text><text class="n" x="653" y="213">107</text><text class="n" x="653" y="228">70</text>
<text class="n" x="693" y="228">10</text><text class="n" x="693" y="243">26</text><text class="n" x="693" y="258">27</text><text class="n" x="693" y="273">39</text><text class="n" x="693" y="288">48</text><text class="n" x="693" y="303">36</text>
<text class="n" x="733" y="258">17</text><text class="n" x="733" y="273">21</text><text class="n" x="733" y="288">12</text><text class="n" x="733" y="303">34</text><text class="n" x="733" y="318">3</text>
<text class="n" x="773" y="258">32</text><text class="n" x="773" y="273">2</text><text class="n" x="773" y="288" style="fill:#fff">4</text>
</g>
<circle cx="650" cy="408" r="3.5" fill="#30c030" stroke="#e8e8e8"/>
<circle cx="778" cy="457" r="3.500" fill="#30c030" stroke="#e8e8e8"/>
<!-- panel bottom -->
<rect x="162" y="513" width="1169" height="33" fill="#666"/>
<path d="M162 513.500H1331M162 546.500H1331" stroke="#999"/>
<rect x="162" y="514" width="32" height="32" fill="#b4b4b4"/>
<rect x="194" y="514" width="23" height="32" fill="#9a9a9a"/>
<path d="M194.500 514V546M217 514V546" stroke="#777"/>
<rect x="167" y="520" width="23" height="21" rx="3" fill="#ccc" stroke="#222" stroke-width="1.500"/>
<path d="M167 525H190" stroke="#222" stroke-width="2"/>
<path d="M172 518V523M178.500 518V523M185 518V523" stroke="#222" stroke-width="2"/>
<path d="M171 530h3v2h-3zM177 530h3v2h-3zM183 530h3v2h-3zM171 535h3v2h-3zM177 535h3v2h-3zM183 535h3v2h-3z" fill="#222" stroke="#222"/>
<path d="M213 516L198 531L213 544Z" fill="#000"/>
<path d="M220 530.500h40M262 531.500h80M345 532h120M470 532h180M650 533H990" stroke="#35b035" stroke-dasharray="3 1" fill="none"/>
<path d="M990 530H1021" stroke="#35b035" stroke-dasharray="3 1" fill="none"/>
<rect x="1021" y="514" width="102" height="32" fill="#3a7ab0" stroke="#5fa8e0"/>
<rect x="1022" y="524" width="100" height="7" fill="#8cbcdc"/>
<path d="M1022 533H1122" stroke="#35b035" stroke-dasharray="3 1"/>
<rect x="1159" y="514" width="22" height="32" fill="#7e7e7e"/>
<path d="M1161 516L1176 530L1161 544Z" fill="#a6a6a6"/>
<rect x="1181" y="514" width="150" height="32" fill="#c4c4c4"/>
<path d="M1181.500 513V546M1330.500 513V546" stroke="#888"/>
<rect x="1245.500" y="518.500" width="15" height="15" rx="2.500" fill="#ddd" stroke="#111" stroke-width="1.800"/>
<path d="M1249 522V529L1251 527L1254 531L1255.500 530L1252 526L1255 525Z" fill="#111"/>
<path d="M1268 541V534L1266 536L1263 532L1261.500 533L1265 537L1262 538Z" fill="#111"/>
<circle cx="1322" cy="522" r="3.500" fill="#30c030" stroke="#222"/>

<!-- lower panes -->
<path d="M9 660.500H1860M9 662.500H1860" stroke="#000"/>
<path d="M9 670.500H1860M9 672.500H1860" stroke="#000"/>
<path d="M9 786.500H1860M9 788.500H1860" stroke="#000"/>
<path d="M9 873.500H1860" stroke="#000"/>
<path d="M1859.500 53V873" stroke="#000"/>
<rect x="11.500" y="674.500" width="343" height="22" fill="#b0c4de" stroke="#8a8a8a"/>
<g transform="translate(22,685) scale(.72)"><use href="#chk"/></g>
<text x="34" y="689" style="font-size:11px;fill:#333" textLength="316">#Volumes Colored [ Source: #6A AUD/USD ]  [ PINK BARS: 2 ]</text>
<text x="13" y="804" style="font-size:12px;fill:#222" textLength="92">RSI(60) 61.5600</text>
<path d="M9 816H1860M9 831.500H1860M9 847H1860" stroke="#000"/>
<!-- volume bars -->
<path fill="none" stroke="#fff0f0" stroke-width="3" d="M10 785V782M18 785V779M34 785V782M50 785V780M82 785V782M138 785V783M162 785V784M178 785V783M210 785V784M242 785V781M274 785V783M298 785V782M306 785V782M370 785V783M402 785V781M474 785V781M522 785V783M546 785V783M618 785V781M666 785V781M730 785V783M762 785V775M818 785V782M850 785V776M898 785V776M938 785V781M954 785V777M1002 785V779M1026 785V781M1074 785V784M1082 785V784M1106 785V783M1114 785V782M1122 785V768M1178 785V782M1194 785V774M1210 785V783M1218 785V770M1226 785V769M1250 785V779M1282 785V784M1314 785V784M1346 785V780M1354 785V779M1410 785V746M1442 785V758"/>
<path fill="none" stroke="#ff70b8" stroke-width="3" d="M26 785V783M42 785V785M74 785V784M90 785V784M122 785V784M186 785V784M234 785V784M314 785V784M338 785V784M386 785V784M394 785V784M450 785V784M490 785V784M530 785V784M602 785V784M674 785V779M682 785V781M690 785V782M738 785V784M770 785V784M826 785V784M866 785V784M906 785V781M946 785V784M970 785V783M978 785V784M1018 785V784M1042 785V783M1050 785V784M1090 785V785M1138 785V776M1146 785V782M1162 785V782M1170 785V784M1202 785V784M1234 785V784M1266 785V782M1274 785V784M1338 785V782M1394 785V746M1402 785V764M1426 785V773M1434 785V780M1466 785V774M1474 785V777M1482 785V782M1514 785V770M1522 785V770M1530 785V775M1554 785V774M1562 785V780M1570 785V783"/>
<path fill="none" stroke="#30c830" stroke-width="3" d="M34 785V781M66 785V769M218 785V782M226 785V783M266 785V783M362 785V781M410 785V782M458 785V783M562 785V782M642 785V782M650 785V779M714 785V782M778 785V778M842 785V782M858 785V780M914 785V776M962 785V782M986 785V781M994 785V782M1010 785V780M1034 785V782M1058 785V781M1066 785V783M1098 785V784M1130 785V774M1154 785V780M1186 785V781M1242 785V780M1258 785V770M1290 785V784M1298 785V783M1306 785V782M1322 785V777M1330 785V778M1362 785V778M1370 785V758M1378 785V679M1386 785V744M1418 785V760M1450 785V773M1458 785V771M1490 785V779M1498 785V765M1506 785V766M1538 785V773M1546 785V757"/>
<text x="1570" y="780" style="font-size:12px;fill:#f00">38</text>
<!-- rsi line -->
<polyline class="l" stroke="#000" stroke-width="1.300" points="9,839 17,840.700 27,838.300 49,839.300 70,839 91,837.300 116,838.300 125,836.700 171,839 201,836.700 226,835.700 250,834 277,831.700 299,835 323,836.700 363,836.700 375,833.300 405,833.300 433,835 469,835 518,834.300 546,837.300 567,835.700 579,836.700 616,832.300 649,830.700 665,832.300 683,830.700 701,832.300 744,832.300 756,835 780,833.300 817,837.300 835,836.700 851,838.300 866,835.700 890,835.700 899,837.300 927,837.300 956,838"/>
<polyline class="l" stroke="#000" stroke-width="1.300" points="956,838 992,837.700 1005,838.300 1029,836.700 1050,838.300 1066,836.700 1096,836.700 1120,839 1163,838.300 1175,839.300 1200,836.700 1227,839.300 1260,835.700 1303,833.300 1346,835 1364,833.300 1376,823.300 1386.500,818.300 1410,825 1419,823.300 1449,824 1458,822.300 1467,825 1498,822.700 1519,820.300 1547,820.300 1556,822.300 1569,821.300"/>
<!-- axis text -->
<g>
<text class="ax" x="1866" y="60">0.65210</text><text class="ax" x="1866" y="112">0.65175</text><text class="ax" x="1866" y="165">0.65140</text><text class="ax" x="1866" y="218">0.65105</text><text class="ax" x="1866" y="271">0.65070</text><text class="ax" x="1866" y="324">0.65035</text><text class="ax" x="1866" y="377">0.65000</text><text class="ax" x="1866" y="430">0.64965</text><text class="ax" x="1866" y="483">0.64930</text><text class="ax" x="1866" y="537">0.64895</text><text class="ax" x="1866" y="589">0.64860</text><text class="ax" x="1866" y="642">0.64825</text>
<rect x="1861" y="170" width="50" height="14" fill="#000"/><text class="ax" x="1866" y="181" style="fill:#fff">0.65129</text>
<rect x="1861" y="191" width="50" height="14" fill="#000"/><text class="ax" x="1866" y="202" style="fill:#fff">0.65115</text>
<rect x="1860" y="520" width="51" height="12" fill="#0000f0"/><text class="ax" x="1866" y="530" style="fill:#fff">0.64900</text>
<text class="ax" x="1863" y="686">1884</text><text class="ax" x="1863" y="782">0</text>
<text class="ax" x="1863" y="802">100</text>
<rect x="1862" y="810" width="15" height="13" fill="#000"/><text class="ax" x="1863" y="821" style="fill:#fff">68</text>
<rect x="1862" y="825" width="15" height="13" fill="#000"/><text class="ax" x="1863" y="836" style="fill:#fff">50</text>
<rect x="1862" y="841" width="15" height="12" fill="#000"/><text class="ax" x="1863" y="851" style="fill:#fff">31</text>
<text class="ax" x="1863" y="870">0</text>
</g>
<path d="M1860 57h3M1860 107h3M1860 160h3M1860 213h3M1860 266h3M1860 319h3M1860 372h3M1860 425h3M1860 478h3M1860 584h3M1860 637h3M1860 674h3M1860 785h3" stroke="#000"/>
<path d="M9.500 873V878M106.500 873V878M202.500 873V878M298.500 873V878M394.500 873V878M490.500 873V878M586.500 873V878M682.500 873V878M778.500 873V878M874.500 873V878M970.500 873V878M1066.500 873V878M1162.500 873V878M1258.500 873V878M1354.500 873V878M1450.500 873V878M1546.500 873V878" stroke="#000"/>
<text class="ax" x="10" y="889">29 Feb 2024</text><text class="ax" x="106" y="889">29 Feb 12:51</text><text class="ax" x="202" y="889">29 Feb 13:03</text><text class="ax" x="298" y="889">29 Feb 13:15</text><text class="ax" x="394" y="889">29 Feb 13:27</text><text class="ax" x="490" y="889">29 Feb 13:39</text><text class="ax" x="586" y="889">29 Feb 13:51</text><text class="ax" x="682" y="889">29 Feb 14:03</text><text class="ax" x="778" y="889">29 Feb 14:15</text><text class="ax" x="874" y="889">29 Feb 14:27</text><text class="ax" x="970" y="889">29 Feb 14:39</text><text class="ax" x="1066" y="889">29 Feb 14:51</text><text class="ax" x="1162" y="889">29 Feb 15:03</text><text class="ax" x="1258" y="889">29 Feb 15:15</text><text class="ax" x="1354" y="889">29 Feb 15:27</text><text class="ax" x="1450" y="889">29 Feb 15:39</text><text class="ax" x="1546" y="889">29 Feb 15:51</text>
</svg>
</body></html>
